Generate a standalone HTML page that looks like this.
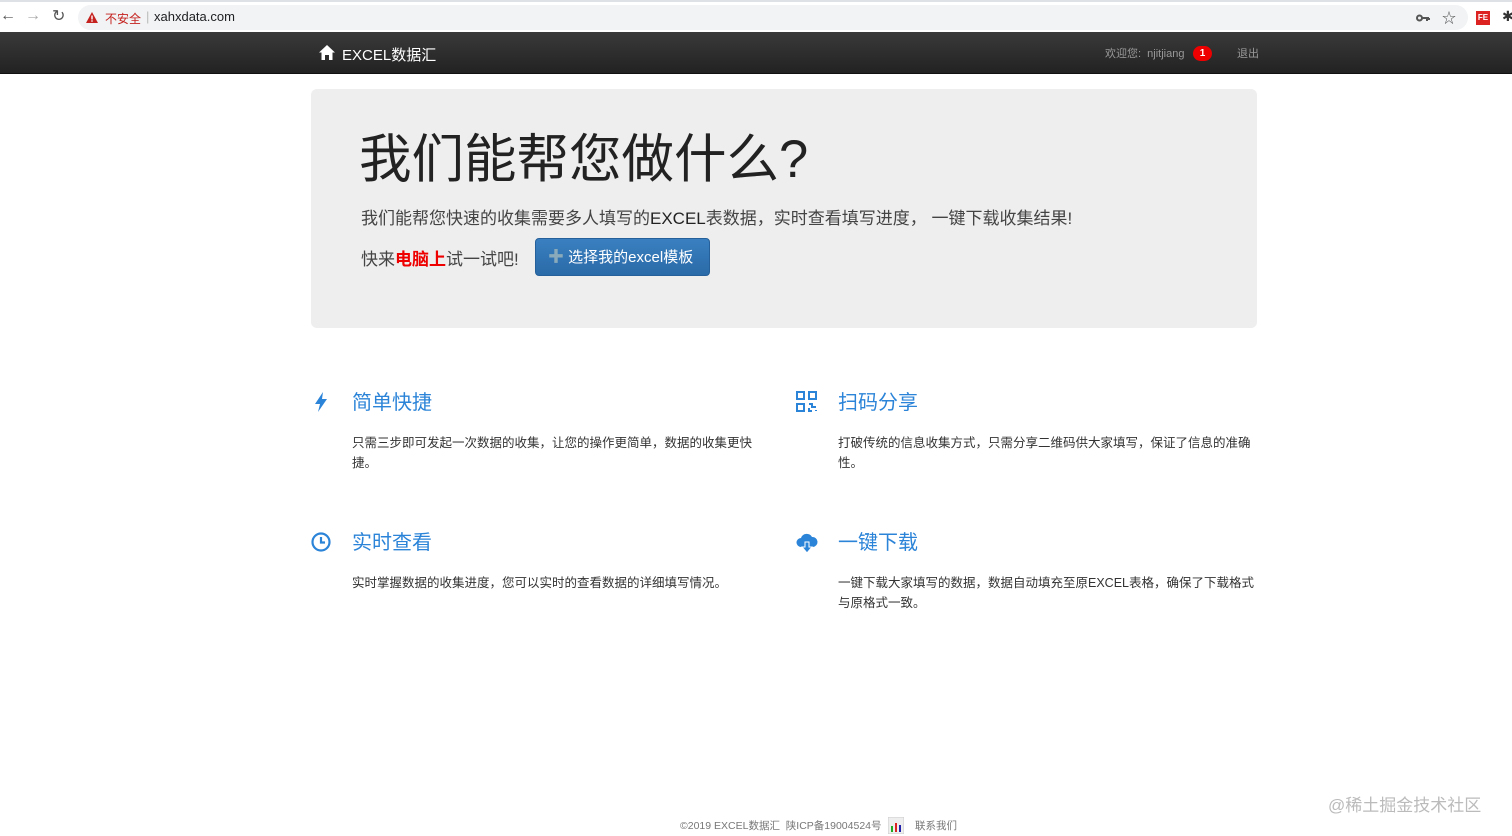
<!DOCTYPE html>
<html><head><meta charset="utf-8"><style>
*{margin:0;padding:0;box-sizing:border-box}
body{width:1512px;height:836px;overflow:hidden;background:#fff;font-family:"Liberation Sans","Noto Sans CJK SC",sans-serif;position:relative;color:#333}
.chrome{position:absolute;left:0;top:0;width:1512px;height:32px;background:#fff;border-top:2px solid #dee1e6}
.addr{position:absolute;left:78px;top:3px;width:1390px;height:25px;background:#f1f3f4;border-radius:13px}
.nav{position:absolute;left:0;top:32px;width:1512px;height:42px;background:linear-gradient(#3a3a3a,#222);border-bottom:1px solid #111}
.abs{position:absolute;white-space:nowrap}
.jumbo{position:absolute;left:311px;top:89px;width:946px;height:239px;background:#eee;border-radius:6px}
.ft{color:#2c84d8;font-size:20px}
.fd{font-size:12.5px;color:#333;line-height:20px}
</style></head><body>
<div class="chrome"><div class="addr"></div>
<span class="abs" style="left:0;top:5px;font-size:16px;color:#555">←</span>
<span class="abs" style="left:25px;top:5px;font-size:16px;color:#aaa">→</span>
<span class="abs" style="left:52px;top:4px;font-size:16px;color:#555">↻</span>
<svg class="abs" style="left:86px;top:10px" width="12" height="11"><path d="M6 0L12 11H0Z" fill="#c5221f"/><rect x="5.3" y="3.5" width="1.4" height="4" fill="#fff"/><rect x="5.3" y="8.3" width="1.4" height="1.4" fill="#fff"/></svg>
<span class="abs" style="left:105px;top:8px;font-size:12px;color:#c5221f">不安全</span>
<span class="abs" style="left:146px;top:7px;font-size:13px;color:#bbb">|</span>
<span class="abs" style="left:154px;top:7px;font-size:13px;color:#202124">xahxdata.com</span>
<svg class="abs" style="left:1416px;top:12px" width="14" height="8"><circle cx="3.5" cy="4" r="2.5" fill="none" stroke="#555" stroke-width="2"/><path d="M6 4h7M11 4v3M13 4v2" stroke="#555" stroke-width="2"/></svg>
<span class="abs" style="left:1442px;top:6px;font-size:14px;color:#555">☆</span>
<span class="abs" style="left:1476px;top:9px;width:14px;height:14px;background:#d22;color:#fff;font-size:8px;font-weight:bold;line-height:14px;text-align:center">FE</span>
<span class="abs" style="left:1502px;top:6px;font-size:14px;color:#333">✱</span>
</div>
<div class="nav">
<svg class="abs" style="left:319px;top:13px" width="16" height="15"><path d="M8 0L16 7.5H13.5V15H10V10H6V15H2.5V7.5H0Z" fill="#fff"/></svg>
<span class="abs" style="left:342px;top:12px;font-size:15px;color:#fff">EXCEL数据汇</span>
<span class="abs" style="left:1105px;top:13px;font-size:11px;color:#999">欢迎您:&nbsp; njitjiang</span>
<span class="abs" style="left:1193px;top:14px;width:19px;height:15px;border-radius:8px;background:#e00;color:#fff;font-size:10px;font-weight:bold;text-align:center;line-height:15px">1</span>
<span class="abs" style="left:1237px;top:13px;font-size:11px;color:#999">退出</span>
</div>
<div class="jumbo"></div>
<span class="abs" style="left:359px;top:125px;font-size:52.5px;color:#222;line-height:70px">我们能帮您做什么?</span>
<span class="abs" style="left:361px;top:204px;font-size:17px;color:#444">我们能帮您快速的收集需要多人填写的<span style="color:#222">EXCEL</span>表数据，实时查看填写进度，&nbsp;一键下载收集结果!</span>
<span class="abs" style="left:361px;top:245px;font-size:17px;color:#444">快来<b style="color:#e00">电脑上</b>试一试吧!</span>
<div class="abs" style="left:535px;top:238px;width:175px;height:38px;border-radius:4px;background:linear-gradient(#3a80c0,#2a6aa8);border:1px solid #25609a;color:#fff;font-size:15px;line-height:38px;padding-left:12px"><span style="color:#8ab;font-size:16px">✚</span> 选择我的excel模板</div>

<svg class="abs" style="left:314px;top:392px" width="14" height="20"><path d="M9 0L1 12H6L4 20L13 7H8Z" fill="#2c84d8"/></svg>
<span class="abs ft" style="left:352px;top:386px">简单快捷</span>
<div class="abs fd" style="left:352px;top:433px;white-space:normal;width:410px">只需三步即可发起一次数据的收集，让您的操作更简单，数据的收集更快捷。</div>

<svg class="abs" style="left:796px;top:391px" width="21" height="21" fill="none" stroke="#2c84d8" stroke-width="2"><rect x="1" y="1" width="7" height="7"/><rect x="13" y="1" width="7" height="7"/><rect x="1" y="13" width="7" height="7"/><path d="M13 13h3v3h4M13 17v3h3M20 19v1"/></svg>
<span class="abs ft" style="left:838px;top:386px">扫码分享</span>
<div class="abs fd" style="left:838px;top:433px;white-space:normal;width:420px">打破传统的信息收集方式，只需分享二维码供大家填写，保证了信息的准确性。</div>

<svg class="abs" style="left:311px;top:532px" width="20" height="20" fill="none" stroke="#2c84d8" stroke-width="2.2"><circle cx="10" cy="10" r="8.5"/><path d="M10 5v5.5h4"/></svg>
<span class="abs ft" style="left:352px;top:526px">实时查看</span>
<div class="abs fd" style="left:352px;top:573px">实时掌握数据的收集进度，您可以实时的查看数据的详细填写情况。</div>

<svg class="abs" style="left:796px;top:533px" width="22" height="20"><path d="M5 14A4.5 4.5 0 0 1 5 5A6 6 0 0 1 16 4A5 5 0 0 1 17 14Z" fill="#2c84d8"/><path d="M9 9h4v5h3l-5 6-5-6h3Z" fill="#2c84d8" stroke="#fff" stroke-width="1"/></svg>
<span class="abs ft" style="left:838px;top:526px">一键下载</span>
<div class="abs fd" style="left:838px;top:573px;white-space:normal;width:420px">一键下载大家填写的数据，数据自动填充至原EXCEL表格，确保了下载格式与原格式一致。</div>

<span class="abs" style="left:1328px;top:791px;font-size:17px;color:#bbb">@稀土掘金技术社区</span>
<span class="abs" style="left:680px;top:818px;font-size:10.5px;color:#777">©2019 EXCEL数据汇&nbsp; 陕ICP备19004524号</span>
<svg class="abs" style="left:888px;top:817px" width="16" height="17"><rect width="16" height="17" fill="#eee" stroke="#ccc"/><rect x="3" y="9" width="2" height="6" fill="#2a2"/><rect x="7" y="6" width="2" height="9" fill="#d22"/><rect x="11" y="8" width="2" height="7" fill="#22a"/></svg>
<span class="abs" style="left:915px;top:818px;font-size:10.5px;color:#777">联系我们</span>
</body></html>
